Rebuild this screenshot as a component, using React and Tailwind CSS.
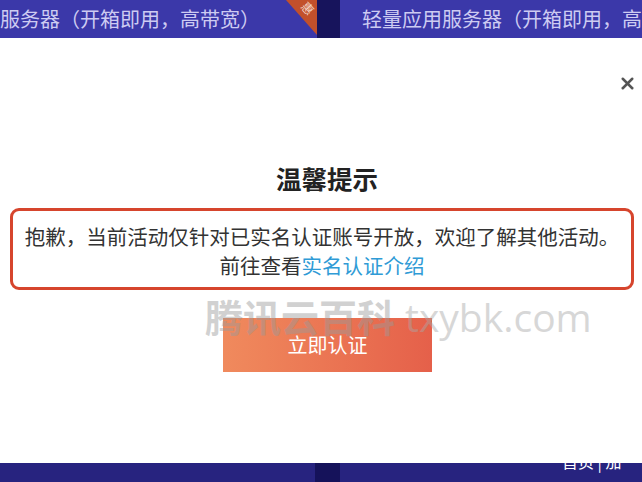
import { X } from "lucide-react";

const App = () => {
  return (
    <div
      className="relative h-[482px] w-[642px] overflow-hidden bg-white flex flex-col"
      style={{ fontFamily: '"Noto Sans CJK SC", "Noto Sans", sans-serif' }}
    >
      {/* top product cards */}
      <div className="h-[38px] flex shrink-0">
        <div className="relative w-[317px] bg-[#3b38a9] flex items-center overflow-hidden whitespace-nowrap">
          <span className="text-[20px] leading-[28px] text-[#cdcbf2]">
            服务器（开箱即用，高带宽）
          </span>
          <svg className="absolute right-0 top-0" width="34" height="36" viewBox="0 0 34 36">
            <polygon points="3,0 34,0 34,35" fill="#c2502b" />
          </svg>
          <span className="absolute right-[3px] top-[-1px] rotate-[48deg] text-[12px] text-[#f3d6c8]">
            惠
          </span>
        </div>
        <div className="w-[23px] bg-[#17145c]" />
        <div className="flex-1 bg-[#3b38a9] flex items-center pl-[22px] overflow-hidden whitespace-nowrap">
          <span className="text-[20px] leading-[28px] text-[#cdcbf2]">
            轻量应用服务器（开箱即用，高带宽）
          </span>
        </div>
      </div>

      {/* dialog body */}
      <div className="relative flex-1 flex flex-col bg-white">
        <button className="absolute right-[5px] top-[36px] text-[#555555]">
          <X size={19} strokeWidth={3.2} />
        </button>

        <h2 className="pt-[125px] pl-[12px] text-center text-[25.5px] leading-[30px] font-bold text-[#222222]">
          温馨提示
        </h2>

        <div className="mt-[15px] ml-[10px] w-[624px] h-[82px] border-[3px] border-[#d6452d] rounded-[9px] pt-[11px] text-center text-[20.5px] leading-[29px] text-[#333333]">
          <p>抱歉，当前活动仅针对已实名认证账号开放，欢迎了解其他活动。</p>
          <p>
            前往查看<span className="text-[#2f9bd6]">实名认证介绍</span>
          </p>
        </div>

        <button className="mt-[28px] ml-[223px] w-[209px] h-[54px] bg-gradient-to-r from-[#f08a5d] to-[#e5604a] text-white text-[20px] leading-[54px]">
          立即认证
        </button>
      </div>

      {/* bottom cards */}
      <div className="h-[19px] flex shrink-0">
        <div className="w-[315px] bg-[#27237f]" />
        <div className="w-[25px] bg-[#15125a]" />
        <div className="flex-1 bg-[#27237f]" />
      </div>

      <span className="absolute left-[562px] top-[451px] text-[16px] leading-[20px] text-white whitespace-nowrap">
        首页 | 加
      </span>

      {/* watermark */}
      <div className="absolute left-[205px] top-[293px] flex items-baseline whitespace-nowrap pointer-events-none opacity-45">
        <span className="text-[38px] leading-[46px] font-bold text-[#9a9a9a]">腾讯云百科</span>
        <span
          className="ml-[10px] text-[39px] leading-[46px] text-[#a8a8a8]"
          style={{ fontFamily: '"Open Sans", sans-serif' }}
        >
          txybk.com
        </span>
      </div>
    </div>
  );
};

export default App;
